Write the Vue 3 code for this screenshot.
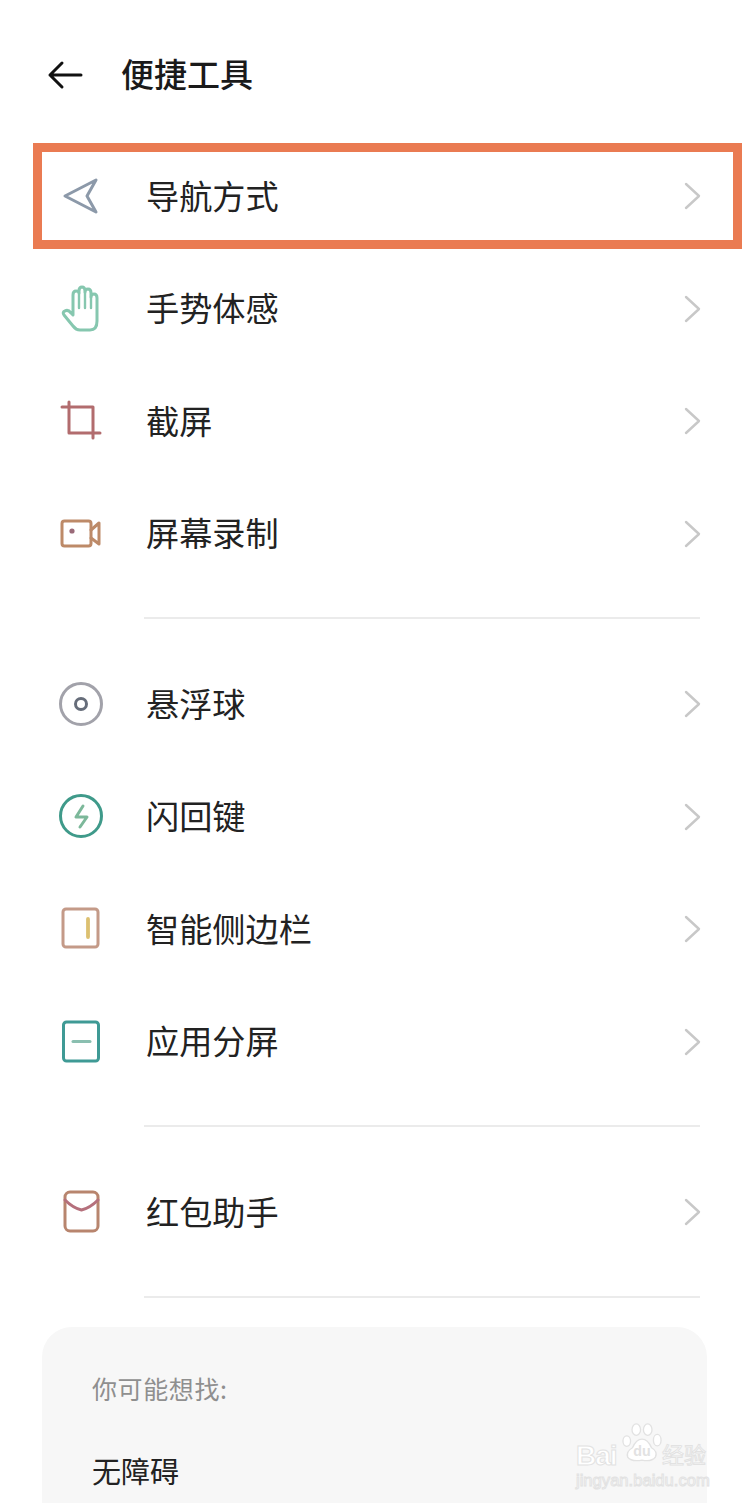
<script setup>
const groups = [
  [
    { icon: 'nav', label: '导航方式' },
    { icon: 'hand', label: '手势体感' },
    { icon: 'crop', label: '截屏' },
    { icon: 'video', label: '屏幕录制' }
  ],
  [
    { icon: 'ball', label: '悬浮球' },
    { icon: 'flash', label: '闪回键' },
    { icon: 'side', label: '智能侧边栏' },
    { icon: 'split', label: '应用分屏' }
  ],
  [
    { icon: 'packet', label: '红包助手' }
  ]
]
</script>

<template>
  <div class="page">
    <header class="header">
      <svg class="back" width="36" height="30" viewBox="0 0 36 30" fill="none" stroke="#111" stroke-width="3" stroke-linecap="round" stroke-linejoin="round">
        <path d="M34 15H3M15 3 3 15l12 12" />
      </svg>
      <h1 class="title">便捷工具</h1>
    </header>

    <section v-for="(group, i) in groups" :key="i" class="group">
      <div v-for="item in group" :key="item.label" class="row">
        <svg class="icon" width="50" height="50" viewBox="0 0 50 50" fill="none" stroke-width="3" stroke-linecap="round" stroke-linejoin="round">
          <path v-if="item.icon === 'nav'" d="M9 25 40 9 31 25 40 41Z" stroke="#8c99a9" />
          <g v-else-if="item.icon === 'hand'" stroke="#86c7af">
            <path d="M41 14V37Q41 46 34 46H24Q20 46 17 42L8 31Q6 28 9 27Q12 25 15 29L17 31V11Q17 7 20 7T23 9V7Q23 3 26 3T29 7V8Q29 5 32 5T35 9V13Q35 10 38 10T41 14Z" />
            <path d="M23 9V24M29 8V24M35 13V24" stroke-width="2.4" />
          </g>
          <path v-else-if="item.icon === 'crop'" d="M6 11H37V42M13 6V37H44" stroke="#b26c6e" />
          <g v-else-if="item.icon === 'video'">
            <rect x="6" y="12" width="29" height="25" rx="2.5" stroke="#bd8a68" />
            <circle cx="16" cy="22" r="2.6" fill="#9a6a78" stroke="none" />
            <path d="M35 21 43 14V35L35 29" stroke="#bd8a68" />
          </g>
          <g v-else-if="item.icon === 'ball'">
            <circle cx="25" cy="25" r="20.5" stroke="#a2a2aa" />
            <circle cx="25" cy="25" r="5.5" stroke="#666d7a" />
          </g>
          <g v-else-if="item.icon === 'flash'">
            <circle cx="25" cy="24" r="20.5" stroke="#3f9a8a" />
            <path d="M27 14 20 25H31L24 35" stroke="#7cb89a" />
          </g>
          <g v-else-if="item.icon === 'side'">
            <rect x="7" y="5" width="35" height="38" rx="3" stroke="#c49a88" />
            <path d="M32 15V33" stroke="#dcc070" stroke-width="3.8" />
          </g>
          <g v-else-if="item.icon === 'split'">
            <rect x="7.5" y="5" width="35" height="39" rx="3" stroke="#3f9a95" />
            <path d="M17 24.5H34" stroke="#8abfb0" />
          </g>
          <g v-else-if="item.icon === 'packet'">
            <rect x="9" y="5" width="33" height="39" rx="5" stroke="#b8856e" />
            <path d="M9 13Q17 21 25.5 23 34 21 42 13" stroke="#b5707c" />
          </g>
        </svg>
        <span class="label">{{ item.label }}</span>
        <svg class="chevron" width="18" height="28" viewBox="0 0 18 28" fill="none" stroke="#c8c8c8" stroke-width="2.4" stroke-linecap="round" stroke-linejoin="round">
          <path d="M2 2 15 14 2 26" />
        </svg>
      </div>
      <div class="divider"></div>
    </section>

    <aside class="card">
      <p class="card-title">你可能想找:</p>
      <p class="card-item">无障碍</p>
    </aside>

    <div class="highlight"></div>

    <div class="watermark">
      <div class="wm-top">
        <span class="wm-bai">Bai</span>
        <svg class="wm-paw" width="40" height="40" viewBox="0 0 42 42" fill="#fff" stroke="#e2e2e2" stroke-width="1.4">
          <ellipse cx="5" cy="19" rx="4" ry="5.5" />
          <ellipse cx="15" cy="7" rx="4.5" ry="6" />
          <ellipse cx="27" cy="7" rx="4.5" ry="6" />
          <ellipse cx="37" cy="18" rx="4" ry="6" />
          <path d="M21 17Q27 17 31 26 38 30 35 36 31 41 21 39 10 41 6 36 4 30 11 26 15 17 21 17Z" />
          <text x="21" y="35" text-anchor="middle" class="wm-du">du</text>
        </svg>
        <span class="wm-cn">经验</span>
      </div>
      <div class="wm-url">jingyan.baidu.com</div>
    </div>
  </div>
</template>

<style scoped>
.page {
  position: relative;
  width: 750px;
  height: 1503px;
  overflow: hidden;
  background: #fff;
  font-family: "Noto Sans CJK SC", "Noto Sans", sans-serif;
  color: #222;
}

.header {
  box-sizing: border-box;
  height: 140px;
  padding: 10px 0 0 47px;
  display: flex;
  align-items: center;
}

.back {
  margin-right: 38px;
}

.title {
  margin: 0 0 4px;
  font-size: 33px;
  font-weight: 500;
  color: #1a1a1a;
}

.row {
  height: 112.5px;
  display: flex;
  align-items: center;
  padding-left: 56px;
}

.icon {
  margin-right: 40px;
  flex-shrink: 0;
}

.label {
  margin-bottom: 4px;
  font-size: 33.2px;
  line-height: 1;
}

.chevron {
  margin-left: auto;
  margin-right: 48px;
}

.divider {
  height: 2px;
  margin: 27px 50px 29px 144px;
  background: #ebebeb;
}

.card {
  margin: 1.5px 43px 0 42px;
  height: 300px;
  box-sizing: border-box;
  padding: 43px 50px;
  border-radius: 30px;
  background: #f7f7f7;
}

.card-title {
  margin: 0;
  font-size: 25px;
  letter-spacing: 0.6px;
  line-height: 36px;
  color: #8f8f8f;
}

.card-item {
  margin: 43px 0 0;
  font-size: 29px;
  line-height: 42px;
  color: #222;
}

.highlight {
  position: absolute;
  left: 33px;
  top: 143px;
  width: 709px;
  height: 106px;
  box-sizing: border-box;
  border: 9px solid #ea7b52;
}

.watermark {
  position: absolute;
  left: 576px;
  top: 1422px;
  width: 136px;
  color: #fff;
  -webkit-text-stroke: 1px #e2e2e2;
}

.wm-top {
  height: 44px;
  display: flex;
  align-items: flex-end;
}

.wm-bai {
  width: 46px;
  margin-bottom: -9px;
  font-family: "Liberation Sans", sans-serif;
  font-size: 28px;
  font-weight: 700;
  letter-spacing: -1px;
  line-height: 38px;
}

.wm-paw {
  margin-bottom: 3px;
  flex-shrink: 0;
}

.wm-du {
  font-family: "Liberation Sans", sans-serif;
  font-size: 15px;
  font-weight: 700;
  -webkit-text-stroke: 0;
  stroke: none;
  fill: #e2e2e2;
}

.wm-cn {
  margin-bottom: -3px;
  font-size: 22px;
  line-height: 32px;
  white-space: nowrap;
}

.wm-url {
  margin-top: 4px;
  font-family: "Liberation Sans", sans-serif;
  font-size: 16.6px;
  line-height: 22px;
  white-space: nowrap;
}
</style>
